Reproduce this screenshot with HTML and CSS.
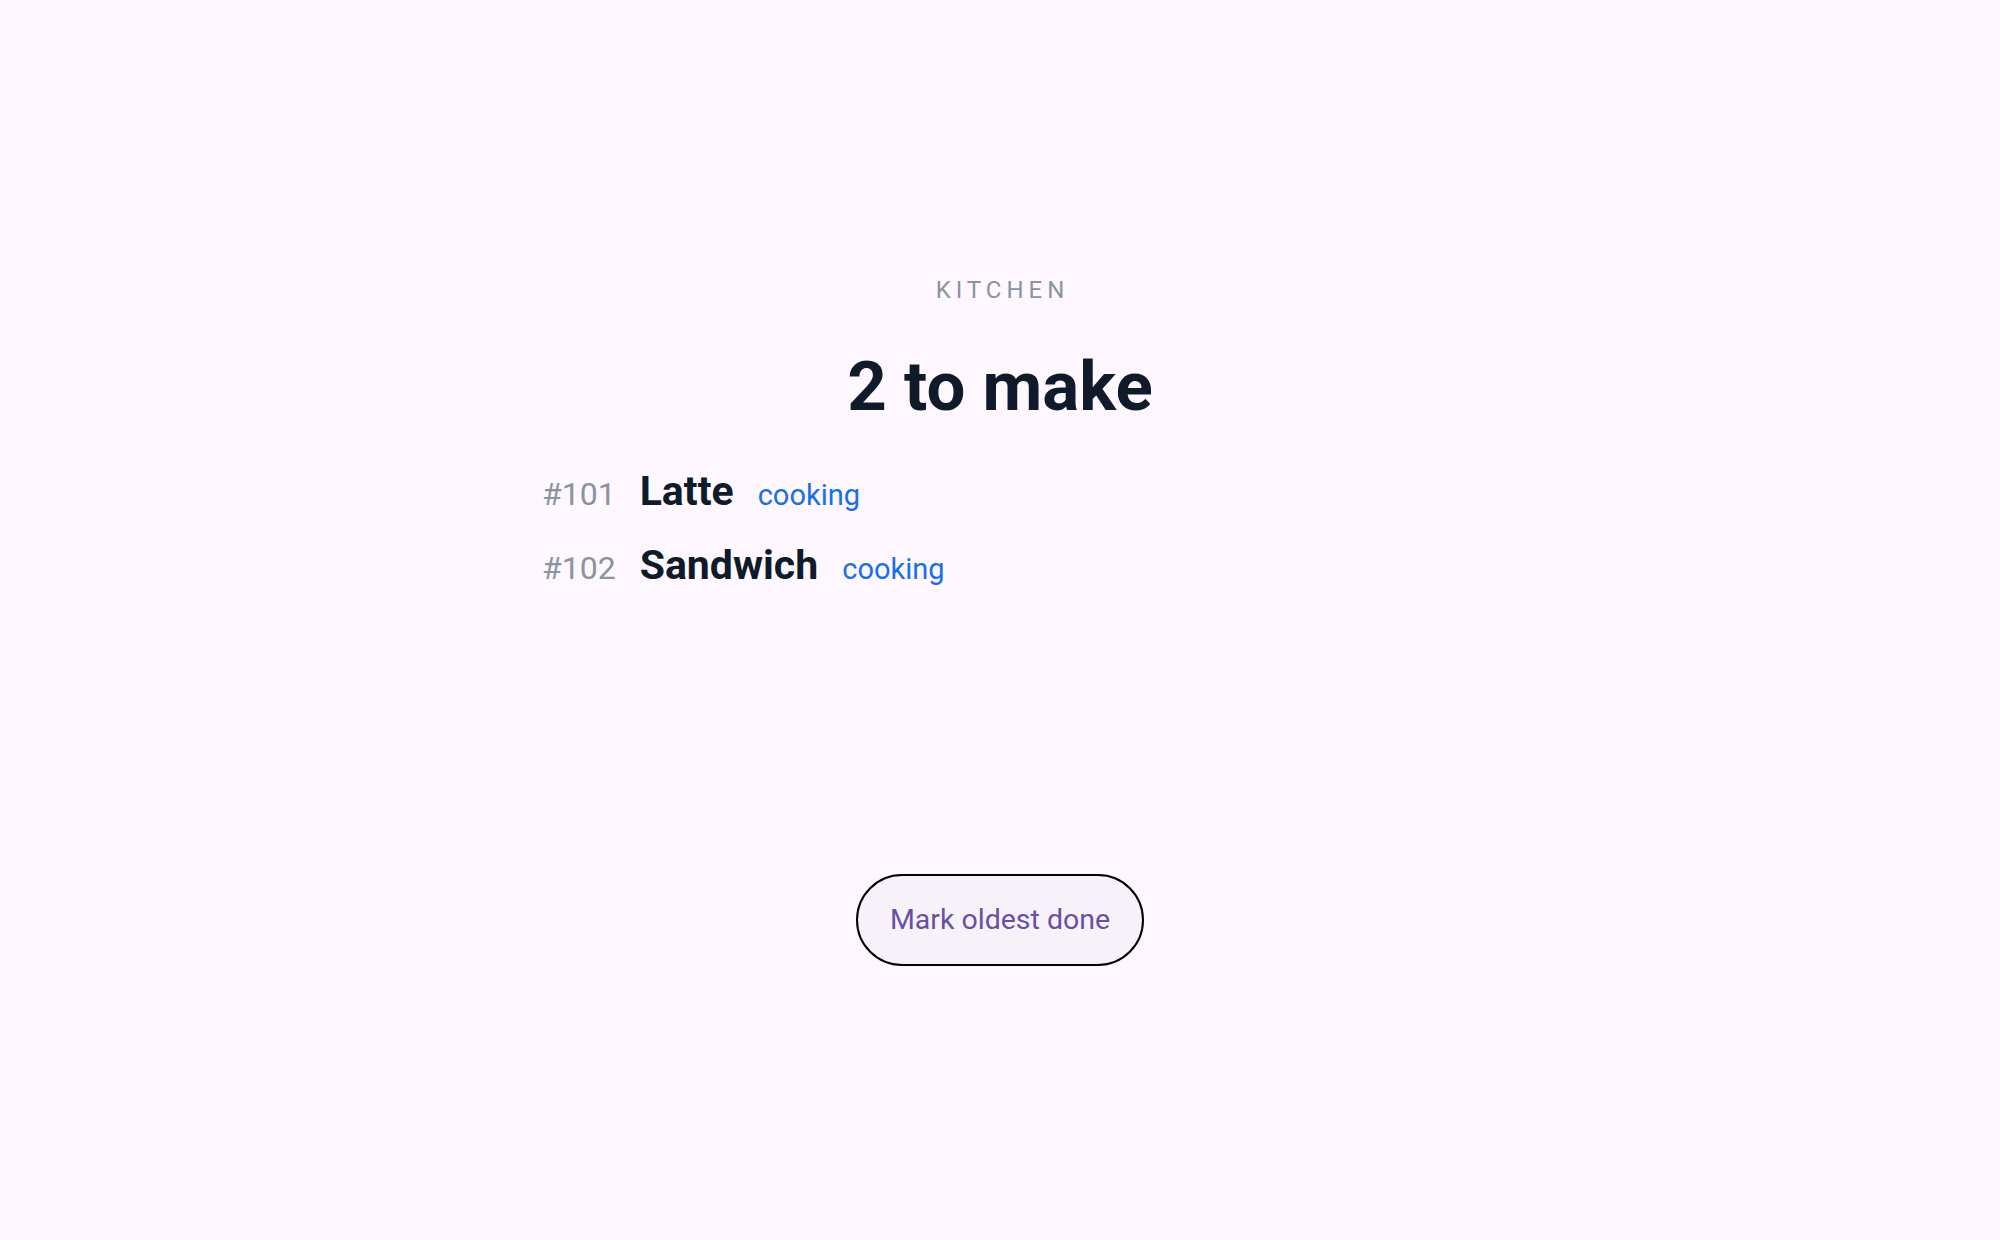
FILE: index.html
```html
<!DOCTYPE html>
<html lang="en">
<head>
<meta charset="utf-8">
<title>Kitchen</title>
<link rel="stylesheet" href="styles.css">
</head>
<body>
<main class="screen">
  <section class="board">
    <div class="eyebrow">KITCHEN</div>
    <h1 class="title">2 to make</h1>
    <ul class="orders">
      <li class="order">
        <span class="order-id">#101</span>
        <span class="order-name">Latte</span>
        <span class="order-status">cooking</span>
      </li>
      <li class="order">
        <span class="order-id">#102</span>
        <span class="order-name">Sandwich</span>
        <span class="order-status">cooking</span>
      </li>
    </ul>
  </section>
  <div class="actions">
    <button class="done-btn" type="button">Mark oldest done</button>
  </div>
</main>
</body>
</html>
```

FILE: styles.css
```css
html, body {
  margin: 0;
  padding: 0;
}

body {
  background: #fef7ff;
  font-family: Roboto, "Liberation Sans", Arial, sans-serif;
  color: #0f1b2a;
}

.screen {
  width: 920px;
  margin: 0 auto;
  padding-top: 276px;
  display: flex;
  flex-direction: column;
}

.board {
  display: flex;
  flex-direction: column;
}

.eyebrow {
  text-align: center;
  font-size: 24px;
  line-height: 28px;
  letter-spacing: 5px;
  padding-left: 5px;
  color: #8a949f;
}

.title {
  margin: 42px 0 0;
  text-align: center;
  font-size: 69px;
  line-height: 82px;
  font-weight: 700;
  color: #0f1b2a;
}

.orders {
  list-style: none;
  margin: 39px 0 0;
  padding: 0 0 0 2px;
  display: flex;
  flex-direction: column;
  gap: 22px;
}

.order {
  display: flex;
  align-items: baseline;
  gap: 24px;
  line-height: 48px;
}

.order-id {
  font-size: 32px;
  color: #8a949f;
}

.order-name {
  font-size: 41px;
  font-weight: 700;
  color: #0f1b2a;
}

.order-status {
  font-size: 29px;
  color: #1a6fe6;
}

.actions {
  margin-top: 281px;
  display: flex;
  justify-content: center;
}

.done-btn {
  font-family: Roboto, "Liberation Sans", Arial, sans-serif;
  font-size: 28.5px;
  line-height: 34px;
  font-weight: 400;
  color: #6750a4;
  background: #f7f2fa;
  border: 2px solid #000;
  border-radius: 999px;
  padding: 27px 32px;
  cursor: pointer;
}
```
